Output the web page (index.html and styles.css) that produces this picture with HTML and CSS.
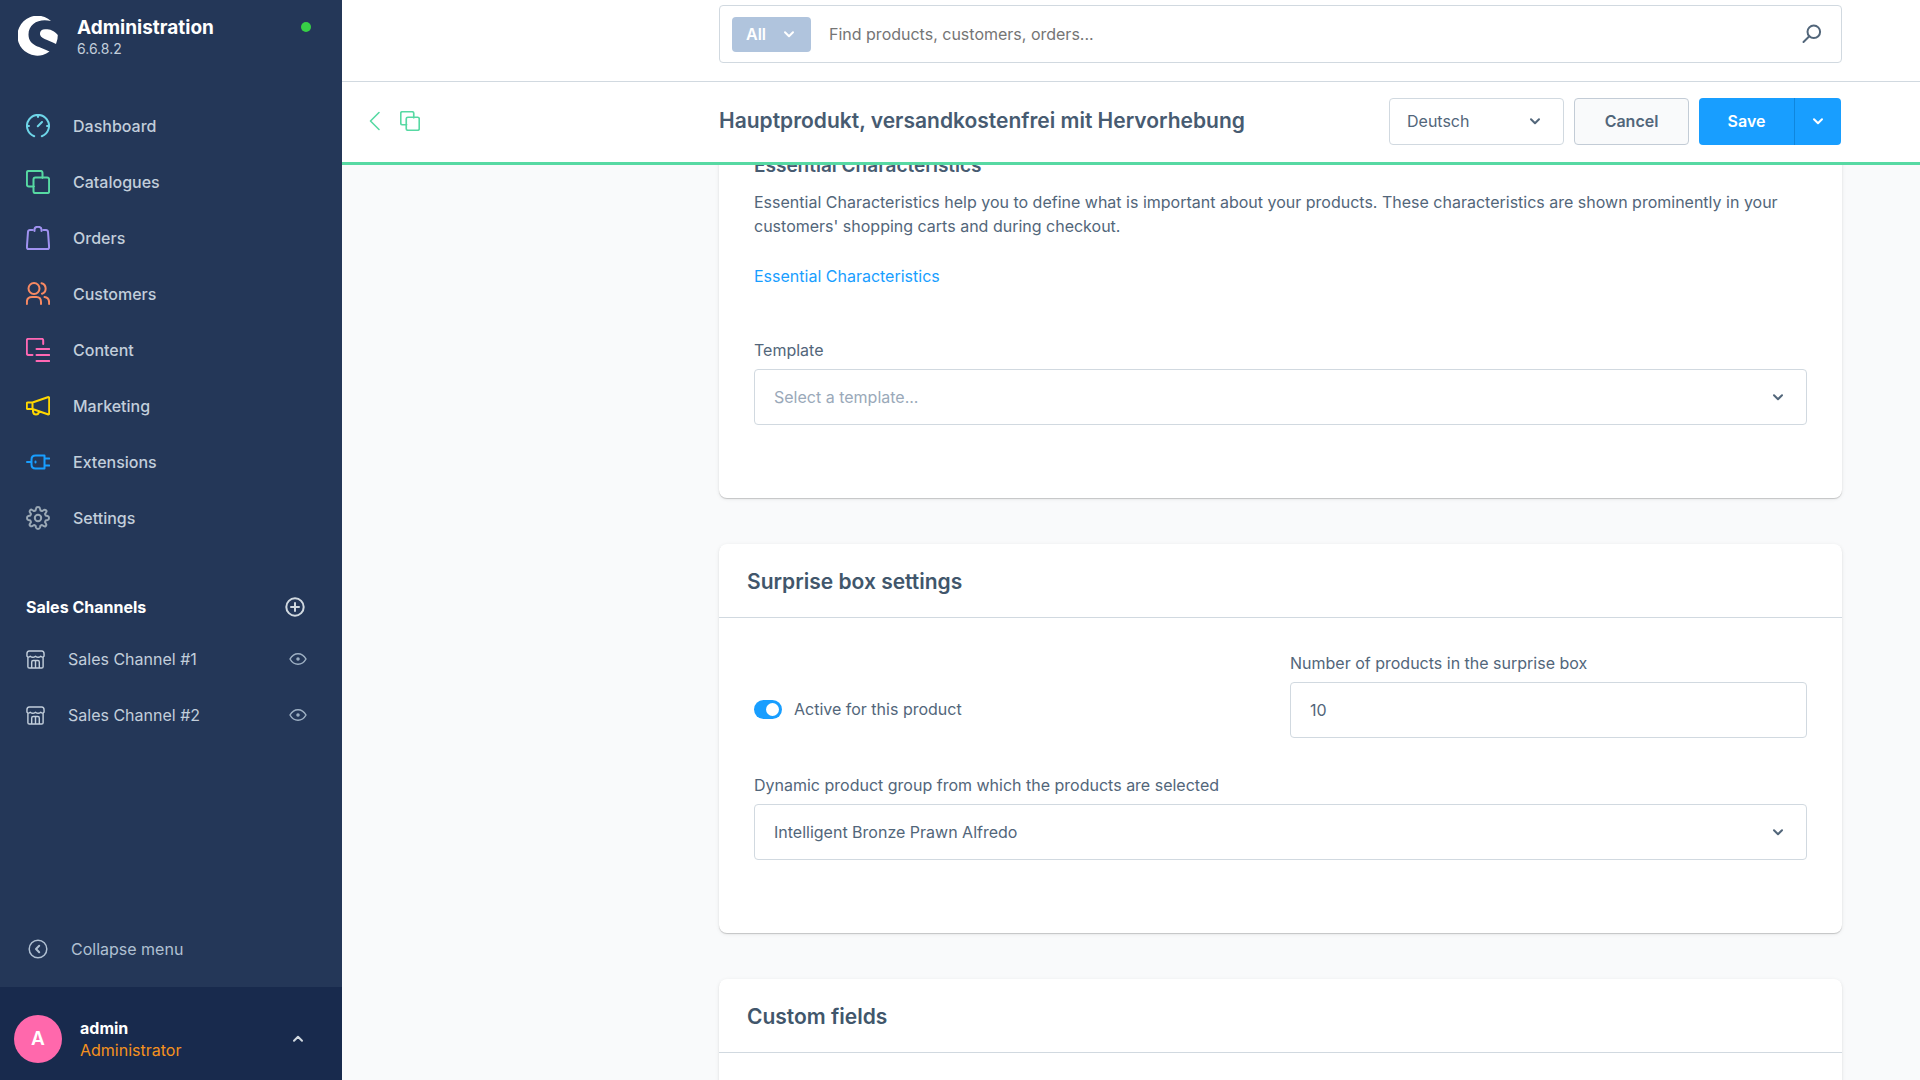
FILE: index.html
```html
<!DOCTYPE html>
<html lang="en">
<head>
<meta charset="utf-8">
<title>Administration</title>
<link rel="stylesheet" href="styles.css">
</head>
<body>
<svg class="sprite" aria-hidden="true">
  <symbol id="chevron" viewBox="0 0 12 12"><path d="M2 4.2l4 4 4-4" fill="none" stroke="currentColor" stroke-width="2" stroke-linecap="round" stroke-linejoin="round"/></symbol>
  <symbol id="copy" viewBox="0 0 24 24"><path d="M8 16.500H2.800Q.9 16.500 .9 14.600V2.800Q.9.9 2.800.9H14.600Q16.500.9 16.500 2.800V8M9.500 7.500H21.200Q23.100 7.500 23.100 9.400V21.200Q23.100 23.100 21.200 23.100H9.400Q7.500 23.100 7.500 21.200V9.400Q7.500 7.500 9.500 7.500Z"/></symbol>
  <symbol id="store" viewBox="0 0 20 20"><path stroke-width="1.500" d="M2 8v9.500Q2 19 3.500 19h13Q18 19 18 17.500V8M3.500 1h13Q19 1 19 4v2.500q-1.500 2-3.500 0q-2.700 2.500-5.500 0q-2.800 2.500-5.500 0Q2.500 8.500 1 6.500V4Q1 1 3.500 1ZM6 19v-6.500q0-1.500 1.500-1.500h5q1.500 0 1.500 1.500V19M10 11v8"/></symbol>
  <symbol id="eye" viewBox="0 0 18 14"><path stroke-width="1.500" d="M1 7C5 0 13 0 17 7C13 14 5 14 1 7Z"/><circle cx="9" cy="7" r="1" stroke-width="1.500"/></symbol>
</svg>
<div class="app">
  <aside class="sidebar">
    <header class="brand">
      <svg class="brand-logo" viewBox="0 0 40 40"><path d="M33 5C22 2 10.500 7 10.500 18.500C10.500 30.500 23 30.500 31.500 35.600A20 20 0 1 1 33 5Z"/><path d="M22 17C21 22.500 30 23.500 38 28Q40 23 39.800 19C36 14 31 13 27 13.200Q22.500 13.500 22 17Z"/></svg>
      <div class="brand-text">
        <strong class="brand-name">Administration</strong>
        <span class="brand-version">6.6.8.2</span>
      </div>
      <span class="status-dot"></span>
    </header>
    <nav class="menu">
      <a class="menu-item" href="#"><svg class="icon cyan" viewBox="0 0 24 24"><path d="M8.200 22.200A11 11 0 1 1 15.800 22.200M12 1.200V3M1.200 12H3M21 12h1.800M11.800 12.200L16 8"/></svg>Dashboard</a>
      <a class="menu-item" href="#"><svg class="icon green"><use href="#copy"/></svg>Catalogues</a>
      <a class="menu-item" href="#"><svg class="icon violet" viewBox="0 0 24 24"><path d="M6.500 4H4Q2.200 4 2 5.800L.9 21Q.8 23 2.600 23H21.400Q23.200 23 23.100 21L22 5.800Q21.800 4 20 4H17.500M8.500 5V3.500Q8.500.8 12 .8T15.500 3.500V5"/></svg>Orders</a>
      <a class="menu-item" href="#"><svg class="icon coral" viewBox="0 0 24 24"><circle cx="8" cy="6.500" r="5.500"/><path d="M.9 22V20Q.9 15 6 15H10.500Q15 15 15 20V22M15.500 1.200A5.500 5.500 0 0 1 16 11.700M18.500 15Q23.100 15.500 23.100 20.500V22"/></svg>Customers</a>
      <a class="menu-item" href="#"><svg class="icon pink" viewBox="0 0 24 24"><path d="M6.500 17H2.600Q.8 17 .8 15.200V2.600Q.8.8 2.600.8H15.700Q17.200.8 17.200 2.600V6M10.500 11H23.200M10.500 17H23.200M10.500 23H23.200"/></svg>Content</a>
      <a class="menu-item" href="#"><svg class="icon yellow" viewBox="0 0 24 24"><path d="M1.800 8.500H6.500V15H1.800Q.8 15 .8 14V9.500Q.8 8.500 1.800 8.500ZM6.500 8.500L21.700 3.200Q23.200 2.800 23.200 4.300V19.200Q23.200 20.800 21.700 20.300L6.500 15M7 15.200V17.500Q7.500 20.500 10 20.500T13 17.500"/></svg>Marketing</a>
      <a class="menu-item" href="#"><svg class="icon blue" viewBox="0 0 24 24"><path d="M1 12H5.500M9.500 5.500H18.500V18.500H9.500Q5.500 18.500 5.500 14.500V9.500Q5.500 5.500 9.500 5.500ZM18.500 8.500H23.200M18.500 15.500H23.200M9.500 11.500V12.500"/></svg>Extensions</a>
      <a class="menu-item" href="#"><svg class="icon grey" viewBox="0 0 24 24"><circle cx="12" cy="12" r="3.200"/><path d="M10 2.500Q10.300 1 12 1T14 2.500L14.500 4.500L16 5.100L17.900 4Q19 3.400 20 4.300T20.100 6.200L19 8L19.600 9.500L21.600 10Q23 10.400 23 12T21.600 14L19.600 14.500L19 16L20.100 17.900Q20.700 19 19.800 20T17.900 20.100L16 19L14.500 19.600L14 21.600Q13.600 23 12 23T10 21.600L9.500 19.600L8 19L6.200 20.100Q5 20.700 4.100 19.800T3.900 17.900L5 16L4.400 14.500L2.400 14Q1 13.600 1 12T2.400 10L4.400 9.500L5 8L3.900 6.200Q3.300 5 4.200 4.100T6.200 4L8 5.100L9.500 4.500Z"/></svg>Settings</a>
    </nav>
    <section class="channels">
      <div class="channels-head">
        <h2 class="channels-title">Sales Channels</h2>
        <button class="icon-button" aria-label="Add sales channel"><svg class="icon icon-add" viewBox="0 0 20 20"><circle cx="10" cy="10" r="8.700"/><path d="M10 6v8M6 10h8"/></svg></button>
      </div>
      <div class="channel"><a class="channel-link" href="#"><svg class="icon icon-store"><use href="#store"/></svg>Sales Channel #1</a><button class="icon-button" aria-label="View Sales Channel #1"><svg class="icon icon-eye"><use href="#eye"/></svg></button></div>
      <div class="channel"><a class="channel-link" href="#"><svg class="icon icon-store"><use href="#store"/></svg>Sales Channel #2</a><button class="icon-button" aria-label="View Sales Channel #2"><svg class="icon icon-eye"><use href="#eye"/></svg></button></div>
    </section>
    <button class="collapse"><svg class="icon icon-collapse" viewBox="0 0 20 20"><circle cx="10" cy="10" r="8.800" stroke-width="1.500"/><path d="M11.200 6.800L8 10l3.200 3.200"/></svg>Collapse menu</button>
    <button class="user">
      <span class="avatar">A</span>
      <span class="user-text"><strong class="user-name">admin</strong><span class="user-role">Administrator</span></span>
      <svg class="chevron chevron-up"><use href="#chevron"/></svg>
    </button>
  </aside>
  <main class="main">
    <div class="topbar page-grid">
      <form class="search">
        <button class="search-type" type="button">All<svg class="chevron"><use href="#chevron"/></svg></button>
        <input class="search-input" type="search" aria-label="Search" placeholder="Find products, customers, orders...">
        <svg class="search-icon" viewBox="0 0 20 20"><circle cx="11.800" cy="7.800" r="6.300"/><path d="M7.300 12.300L1.500 18"/></svg>
      </form>
    </div>
    <div class="page-head page-grid">
      <div class="page-nav">
        <button class="icon-button" aria-label="Back"><svg class="icon icon-back" viewBox="0 0 20 20"><path stroke-width="1.600" d="M14 1.500L5.500 10l8.500 8.500"/></svg></button>
        <button class="icon-button" aria-label="Duplicate"><svg class="icon icon-copy"><use href="#copy"/></svg></button>
      </div>
      <div class="page-bar">
        <h1 class="page-title">Hauptprodukt, versandkostenfrei mit Hervorhebung</h1>
        <div class="select-wrap language"><select class="select" aria-label="Language"><option>Deutsch</option></select><svg class="chevron"><use href="#chevron"/></svg></div>
        <button class="button">Cancel</button>
        <div class="split"><button class="button primary">Save</button><button class="button primary more" aria-label="More save options"><svg class="chevron"><use href="#chevron"/></svg></button></div>
      </div>
    </div>
    <div class="content page-grid">
      <div class="cards">
        <section class="card card-first">
          <div class="card-body">
            <h3 class="section-title">Essential Characteristics</h3>
            <p class="section-text">Essential Characteristics help you to define what is important about your products. These characteristics are shown prominently in your customers' shopping carts and during checkout.</p>
            <a class="link" href="#">Essential Characteristics</a>
            <div class="field">
              <label class="label" for="template">Template</label>
              <div class="select-wrap"><select class="select placeholder" id="template"><option>Select a template...</option></select><svg class="chevron"><use href="#chevron"/></svg></div>
            </div>
          </div>
        </section>
        <section class="card">
          <h2 class="card-title">Surprise box settings</h2>
          <div class="card-body settings">
            <label class="switch-label"><input class="switch" type="checkbox" role="switch" checked>Active for this product</label>
            <div class="field">
              <label class="label" for="amount">Number of products in the surprise box</label>
              <input class="input" id="amount" type="text" inputmode="numeric" value="10">
            </div>
            <div class="field wide">
              <label class="label" for="group">Dynamic product group from which the products are selected</label>
              <div class="select-wrap"><select class="select" id="group"><option>Intelligent Bronze Prawn Alfredo</option></select><svg class="chevron"><use href="#chevron"/></svg></div>
            </div>
          </div>
        </section>
        <section class="card">
          <h2 class="card-title">Custom fields</h2>
          <div class="card-body"></div>
        </section>
      </div>
    </div>
  </main>
</div>
</body>
</html>
```
FILE: styles.css
```css
* { box-sizing: border-box; }

body {
  margin: 0;
  font: 16px/24px Inter, "Liberation Sans", sans-serif;
  color: #52667a;
}

button, input, select { font: inherit; color: inherit; margin: 0; }
button { border: 0; padding: 0; background: none; cursor: pointer; }
a { text-decoration: none; }
h1, h2, h3, p { margin: 0; }

.sprite { display: none; }

.app {
  display: grid;
  grid-template-columns: 342px minmax(0, 1fr);
  grid-template-rows: minmax(0, 1fr);
  height: 100vh;
  overflow: hidden;
}

/* Icons */
.icon {
  flex: none;
  width: 24px;
  height: 24px;
  fill: none;
  stroke: currentColor;
  stroke-width: 2;
  stroke-linecap: round;
  stroke-linejoin: round;
}
.icon-button { display: flex; }
.chevron { flex: none; width: 12px; height: 12px; }
.chevron-up { transform: rotate(180deg); color: #d1d9e0; }
.cyan { color: #6ed5e8; }
.green { color: #57d9a3; }
.violet { color: #a092f0; }
.coral { color: #f88962; }
.pink { color: #ff68b4; }
.yellow { color: #ffd700; }
.blue { color: #189eff; }
.grey { color: #9aa8b5; }

/* Sidebar */
.sidebar {
  display: flex;
  flex-direction: column;
  min-height: 0;
  background: #243758;
  color: #c2cedb;
}
.brand {
  display: flex;
  align-items: flex-start;
  padding: 16px 31px 0 18px;
  height: 98px;
}
.brand-logo { width: 40px; height: 40px; fill: #fff; }
.brand-text { display: flex; flex-direction: column; flex: 1; margin-left: 19px; }
.brand-name { font-size: 19px; line-height: 24px; font-weight: 700; color: #fff; }
.brand-version { font-size: 14px; line-height: 18px; }
.status-dot { width: 10px; height: 10px; margin-top: 6px; border-radius: 50%; background: #37d046; }

.menu { display: flex; flex-direction: column; }
.menu-item {
  display: flex;
  align-items: center;
  gap: 23px;
  height: 56px;
  padding-left: 26px;
  font-weight: 500;
  color: #c2cedb;
}

.channels { margin-top: 37px; }
.channels-head, .channel {
  display: flex;
  align-items: center;
  justify-content: space-between;
  padding: 0 35px 0 26px;
}
.channels-head { height: 48px; padding-right: 37px; }
.channels-title { font-size: 16px; line-height: 24px; font-weight: 700; color: #fff; }
.channel { height: 56px; }
.channel-link { display: flex; align-items: center; gap: 23px; color: #c2cedb; }
.icon-add { width: 20px; height: 20px; color: #d1d9e0; }
.icon-store { width: 19px; height: 19px; }
.icon-eye { width: 18px; height: 14px; color: #9fb1c4; }

.collapse {
  display: flex;
  align-items: center;
  gap: 23px;
  height: 76px;
  margin-top: auto;
  padding-left: 28px;
  color: #b0c0d2;
}
.icon-collapse { width: 20px; height: 20px; }

.user {
  display: flex;
  align-items: center;
  height: 93px;
  padding: 10px 38px 0 14px;
  background: #182a4d;
  text-align: left;
}
.avatar {
  width: 48px;
  height: 48px;
  border-radius: 50%;
  background: #ff68ac;
  color: #fff;
  font-size: 19px;
  line-height: 48px;
  font-weight: 600;
  text-align: center;
}
.user-text { display: flex; flex-direction: column; flex: 1; margin-left: 18px; line-height: 22px; }
.user-name { font-weight: 700; color: #fff; }
.user-role { color: #f5921e; }

/* Page frame */
.main { display: flex; flex-direction: column; min-width: 0; background: #f9fafb; }
.page-grid {
  display: grid;
  grid-template-columns: 377px minmax(0, 1fr);
  padding-right: 78px;
  background: #fff;
}
.topbar { flex: none; height: 82px; align-items: start; padding-top: 5px; border-bottom: 1px solid #d1d9e0; }
.search {
  grid-column: 2;
  display: flex;
  align-items: center;
  height: 58px;
  padding: 0 19px 0 12px;
  border: 1px solid #d1d9e0;
  border-radius: 4px;
}
.search-type {
  display: flex;
  align-items: center;
  justify-content: space-between;
  width: 79px;
  height: 35px;
  padding: 0 16px 0 14px;
  border-radius: 4px;
  background: #b0c4dd;
  color: #fff;
  font-weight: 600;
}
.search-input { flex: 1; min-width: 0; padding: 0 18px; border: 0; outline: 0; background: none; }
.search-input::placeholder { color: #757575; opacity: 1; }
.search-icon { width: 20px; height: 20px; fill: none; stroke: #52667a; stroke-width: 2; stroke-linecap: round; }

.page-head { flex: none; height: 83px; align-items: center; padding-bottom: 2px; border-bottom: 3px solid #57d9a3; }
.page-nav { display: flex; align-items: center; gap: 15px; padding-left: 23px; color: #57d9a3; }
.icon-back, .icon-copy { width: 20px; height: 20px; }
.page-bar { display: flex; align-items: center; gap: 10px; padding-right: 1px; }
.page-title { flex: 1; font-size: 21px; line-height: 28px; font-weight: 600; color: #475b71; }

.button {
  width: 115px;
  height: 47px;
  border: 1px solid #c3ccd6;
  border-radius: 4px;
  background: #f9fafb;
  font-weight: 600;
}
.split { display: flex; }
.primary { width: 95px; border: 0; border-radius: 4px 0 0 4px; background: #189eff; color: #fff; }
.more {
  display: grid;
  place-items: center;
  width: 47px;
  border-left: 1px solid #0f86dd;
  border-radius: 0 4px 4px 0;
}

/* Cards */
.content { flex: 1; min-height: 0; background: #f9fafb; overflow: hidden; }
.cards { grid-column: 2; display: flex; flex-direction: column; gap: 46px; }
.card {
  flex: none;
  border-radius: 8px;
  background: #fff;
  box-shadow: 0 1px 1px rgba(0, 0, 0, .18), 0 1px 4px rgba(0, 0, 0, .08);
}
.card-title {
  padding: 25px 28px 22px;
  border-bottom: 1px solid #d1d9e0;
  font-size: 21px;
  line-height: 26px;
  font-weight: 600;
  color: #41566b;
}
.card-body { padding: 33px 35px 73px; }
.card-first { margin-top: -44px; }
.section-title { font-size: 19px; line-height: 24px; font-weight: 600; color: #475b71; }
.section-text { margin: 12px 0 26px; }
.link { color: #189eff; }

.field { display: flex; flex-direction: column; gap: 7px; }
.link + .field { margin-top: 50px; }
.input, .select {
  width: 100%;
  height: 56px;
  padding: 0 19px;
  border: 1px solid #d1d9e0;
  border-radius: 4px;
  background: #fff;
  appearance: none;
}
.select.placeholder { color: #9aa9b9; }
.select-wrap { display: grid; align-items: center; }
.select-wrap > * { grid-area: 1 / 1; }
.select-wrap .chevron { justify-self: end; margin-right: 23px; pointer-events: none; }
.language { width: 175px; }
.language .select { height: 47px; padding: 0 17px; }

.settings { display: grid; grid-template-columns: 1fr 1fr; gap: 35px 19px; }
.wide { grid-column: 1 / -1; }
.switch-label { display: flex; align-items: center; align-self: end; gap: 12px; height: 58px; }
.switch {
  display: flex;
  align-items: center;
  justify-content: flex-end;
  width: 28px;
  height: 19px;
  padding: 3px;
  border-radius: 10px;
  background: #189eff;
  appearance: none;
}
.switch::before { content: ""; width: 13px; height: 13px; border-radius: 50%; background: #fff; }
.switch:not(:checked) { justify-content: flex-start; background: #d1d9e0; }
```
